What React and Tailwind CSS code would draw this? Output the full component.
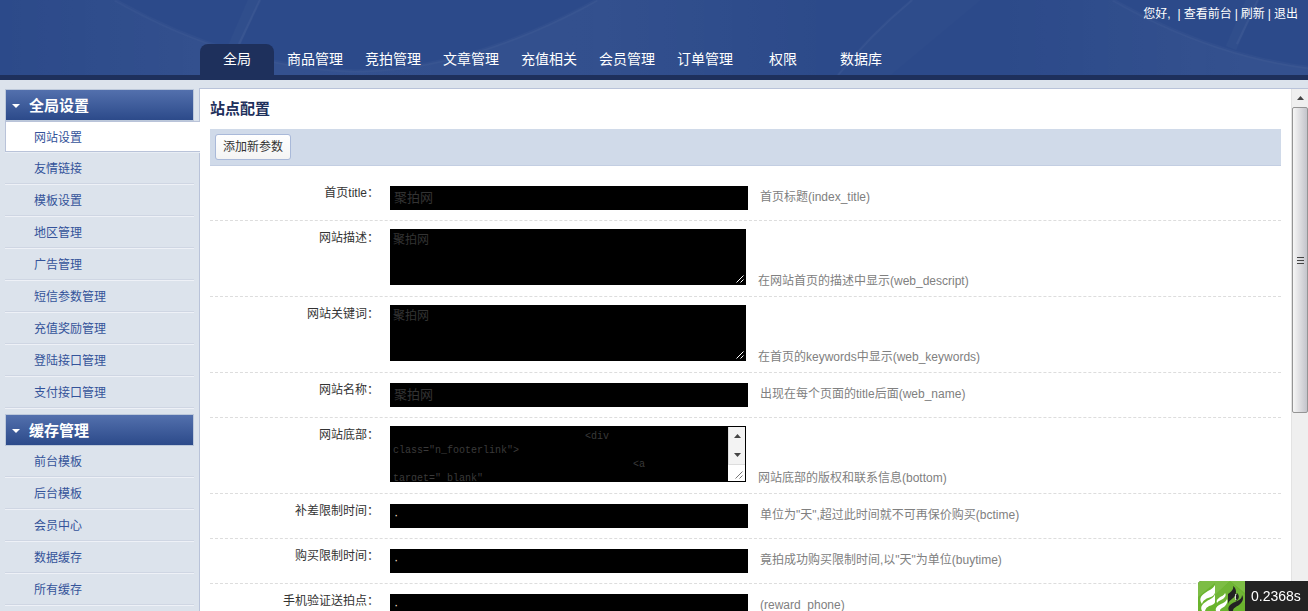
import React, { useState } from 'react';

const NAV_ITEMS = ['全局', '商品管理', '竞拍管理', '文章管理', '充值相关', '会员管理', '订单管理', '权限', '数据库'];

const MENU_GROUPS = [
    {
        title: '全局设置',
        items: ['网站设置', '友情链接', '模板设置', '地区管理', '广告管理', '短信参数管理', '充值奖励管理', '登陆接口管理', '支付接口管理'],
    },
    {
        title: '缓存管理',
        items: ['前台模板', '后台模板', '会员中心', '数据缓存', '所有缓存'],
    },
];

const FOOTER_HTML = ' '.repeat(32) + '<div\nclass="n_footerlink">\n' + ' '.repeat(40) + '<a\ntarget="_blank"';

const FIELDS = [
    { name: 'index_title', label: '首页title', type: 'text', value: '聚拍网', help: '首页标题(index_title)' },
    { name: 'web_descript', label: '网站描述', type: 'area', value: '聚拍网', help: '在网站首页的描述中显示(web_descript)' },
    { name: 'web_keywords', label: '网站关键词', type: 'area', value: '聚拍网', help: '在首页的keywords中显示(web_keywords)' },
    { name: 'web_name', label: '网站名称', type: 'text', value: '聚拍网', help: '出现在每个页面的title后面(web_name)' },
    { name: 'bottom', label: '网站底部', type: 'code', value: FOOTER_HTML, help: '网站底部的版权和联系信息(bottom)' },
    { name: 'bctime', label: '补差限制时间', type: 'number', value: '·', help: '单位为"天",超过此时间就不可再保价购买(bctime)' },
    { name: 'buytime', label: '购买限制时间', type: 'number', value: '·', help: '竟拍成功购买限制时间,以"天"为单位(buytime)' },
    { name: 'reward_phone', label: '手机验证送拍点', type: 'number', value: '·', help: '(reward_phone)' },
];

// Faint arcs and rays behind the header
function HeaderPattern() {
    return (
        <svg className="absolute inset-0 h-full w-full" aria-hidden="true">
            <defs>
                <linearGradient id="glow" gradientUnits="userSpaceOnUse" x1="0" y1="0" x2="830" y2="0">
                    <stop offset="0" stopColor="#fff" stopOpacity="0" />
                    <stop offset="0.3" stopColor="#fff" stopOpacity="0.04" />
                    <stop offset="0.7" stopColor="#fff" stopOpacity="0.035" />
                    <stop offset="1" stopColor="#fff" stopOpacity="0" />
                </linearGradient>
                <pattern id="rays" width="998" height="75" patternUnits="userSpaceOnUse">
                    <path d="M115 0Q235 68 355 71Q470 70 597 0H830V75H0V0Z" fill="url(#glow)" />
                    <path d="M115 0Q235 68 355 71Q470 70 597 0" fill="none" stroke="#fff" strokeOpacity="0.025" strokeWidth="3" />
                    <path d="M260 0L238 50L228 46L248 0Z" fill="#fff" fillOpacity="0.02" />
                    <path d="M260 0L239 44" stroke="#fff" strokeOpacity="0.04" strokeWidth="2" />
                    <path d="M912 0Q870 35 838 75H890L980 0Z" fill="#fff" fillOpacity="0.012" />
                    <path d="M912 0Q870 35 838 75" fill="none" stroke="#fff" strokeOpacity="0.035" strokeWidth="2" />
                </pattern>
            </defs>
            <rect width="100%" height="100%" fill="url(#rays)" />
        </svg>
    );
}

function Header({ active, onSelect }) {
    return (
        <header className="relative flex h-20 shrink-0 flex-col justify-between border-b-5 border-[#1e305c] bg-[#2c4a8a] text-white">
            <HeaderPattern />
            <div className="relative flex justify-end gap-[3px] px-[10px] pt-[6px] text-xs">
                <span className="mr-1">您好,</span>
                <span>|</span>
                <a href="#front">查看前台</a>
                <span>|</span>
                <a href="#refresh">刷新</a>
                <span>|</span>
                <a href="#logout">退出</a>
            </div>
            <nav className="relative ml-[198px] flex text-sm">
                {NAV_ITEMS.map((item) => (
                    <a
                        key={item}
                        href="#nav"
                        onClick={() => onSelect(item)}
                        className={`mx-[2px] flex h-[31px] w-[74px] items-center justify-center rounded-t-lg pb-[2px] ${item === active ? 'bg-[#1e305c]' : ''}`}
                    >
                        {item}
                    </a>
                ))}
            </nav>
        </header>
    );
}

function MenuGroup({ group, active, onSelect }) {
    return (
        <section className="mb-[5px]">
            <h2 className="mr-[5px] flex h-8 items-center gap-[9px] border border-[#bcc8da] bg-linear-to-b from-[#5370ad] to-[#2c4a8a] pt-[2px] pl-[6px] text-[15px] font-bold text-white">
                <svg width="8" height="4" viewBox="0 0 8 4" fill="currentColor" aria-hidden="true">
                    <path d="M0 0H8L4 4Z" />
                </svg>
                {group.title}
            </h2>
            <ul className="text-xs text-[#34539a]">
                {group.items.map((item) => (
                    <li key={item} className={item === active ? 'relative z-10 -mr-px border-b border-[#e8edf4]' : 'mr-[5px] border-b border-[#eef1f7]'}>
                        <a
                            href="#menu"
                            onClick={() => onSelect(item)}
                            className={item === active
                                ? 'flex h-[31px] items-center border-y border-l border-[#b9c3d9] bg-white pt-[2px] pl-7'
                                : 'flex h-[31px] items-center border-b border-[#cfd6e3] pt-[2px] pl-[29px]'}
                        >
                            {item}
                        </a>
                    </li>
                ))}
            </ul>
        </section>
    );
}

function ResizeGrip({ className }) {
    return (
        <svg width="8" height="8" viewBox="0 0 8 8" className={className} stroke="currentColor" aria-hidden="true">
            <path d="M0.5 7.5L7.5 0.5M4.5 7.5L7.5 4.5" />
        </svg>
    );
}

function Arrow({ up }) {
    return (
        <svg width="7" height="4" viewBox="0 0 7 4" fill="#444" aria-hidden="true">
            <path d={up ? 'M0 4H7L3.5 0Z' : 'M0 0H7L3.5 4Z'} />
        </svg>
    );
}

function FieldControl({ field }) {
    const id = `f_${field.name}`;

    if (field.type === 'text' || field.type === 'number') {
        return (
            <input
                id={id}
                name={field.name}
                type="text"
                defaultValue={field.value}
                className={`h-6 w-[358px] bg-black px-1 pb-[3px] text-[13px] outline-none ${field.type === 'text' ? 'text-[#333]' : 'text-[#e8d8c0]'}`}
            />
        );
    }

    if (field.type === 'area') {
        return (
            <div className="relative mb-1">
                <textarea
                    id={id}
                    name={field.name}
                    defaultValue={field.value}
                    className="block h-14 w-[356px] resize-none bg-black px-[3px] py-[3px] text-xs text-[#333] outline-none"
                />
                <ResizeGrip className="absolute right-[2px] bottom-[2px] text-white" />
            </div>
        );
    }

    return (
        <div className="mb-1 flex h-14 w-[356px] border border-black bg-black">
            <textarea
                id={id}
                name={field.name}
                defaultValue={field.value}
                className="block min-w-0 flex-1 resize-none overflow-hidden px-[2px] py-[3px] font-['Liberation_Mono',monospace] text-[10px] leading-[14px] whitespace-pre text-[#3a3a3a] outline-none"
            />
            <div className="flex w-[17px] flex-col bg-white">
                <div className="flex flex-1 flex-col items-center justify-between border-b border-l border-[#ddd] bg-[#f3f3f3] py-[7px]">
                    <Arrow up />
                    <Arrow />
                </div>
                <div className="flex h-4 items-end justify-end p-[2px]">
                    <ResizeGrip className="text-[#777]" />
                </div>
            </div>
        </div>
    );
}

function FieldRow({ field }) {
    const oneLine = field.type === 'text' || field.type === 'number';
    return (
        <div className="flex gap-[11px] border-b border-dashed border-[#ddd]">
            <label htmlFor={`f_${field.name}`} className="w-[169px] shrink-0 pt-[9px] text-right leading-4 text-[#333]">
                {field.label}：
            </label>
            <div className={`flex gap-3 ${oneLine ? 'items-center py-[10px]' : 'items-end pt-2 pb-[7px]'}`}>
                <FieldControl field={field} />
                <span className={`leading-4 text-[#808080] ${oneLine ? 'pb-[2px]' : ''}`}>{field.help}</span>
            </div>
        </div>
    );
}

function ScrollBar() {
    return (
        <div className="flex w-[17px] shrink-0 flex-col border-l border-[#e3e3e3] bg-[#efefef]" aria-hidden="true">
            <div className="flex h-[18px] items-center justify-center">
                <Arrow up />
            </div>
            <div className="flex h-[306px] flex-col items-center justify-center gap-[2px] rounded-[2px] border border-[#949494] bg-linear-to-r from-[#f6f6f6] via-[#dddde0] to-[#c4c4cb]">
                <i className="h-px w-[7px] bg-[#444]" />
                <i className="h-px w-[7px] bg-[#444]" />
                <i className="h-px w-[7px] bg-[#444]" />
            </div>
        </div>
    );
}

function TraceBadge() {
    return (
        <div className="fixed right-0 bottom-0 z-20 flex h-[30px] overflow-hidden rounded-tl-[4px] bg-[#232323] text-sm text-white">
            <svg width="47" height="30" viewBox="0 0 47 30" aria-hidden="true">
                <rect width="47" height="30" fill="#6ab42d" />
                <path d="M0 0H17V2L0 16Z" fill="#7dbd45" />
                <path d="M17 0H47V12L32 0L17 14Z" fill="#7dbd45" />
                <path d="M32 0L47 14V22L17 20V14Z" fill="#70b536" />
                {/* white flame, cut by the second tile */}
                <path d="M17 4C15 8 11 9 7 12C2 15 1 19 4 23C5 19 9 17 13 16C15 15 16 14 17 12Z" fill="#fff" />
                <path d="M17 13C16 17 12 18 9 20C4 23 2 26 4 30H7C8 26 11 25 14 24C16 23 17 22 17 21Z" fill="#fff" />
                <path d="M27 12C26 15 23 15 21 17C19 18 18 20 19 22C21 19 24 19 26 17C28 15 28 13 27 12Z" fill="#fff" />
                <path d="M29 18C28 21 25 22 23 23C19 25 17 27 18 30H22C22 27 25 27 27 25C29 23 30 20 29 18Z" fill="#fff" />
                <path d="M35 5C36 8 34 10 30 13V23C31 19 35 18 37 15C39 11 38 7 35 5Z" fill="#232323" />
                <path d="M44 14C44 18 41 19 37 21C32 23 29 26 31 30H35C35 27 38 26 41 24C45 21 46 17 44 14Z" fill="#232323" />
                <path d="M39 12C42 15 41 18 38 20C37 17 37 14 39 12Z" fill="#232323" />
                <path d="M38 13C37 15 37 17 38 19" fill="none" stroke="#fff" />
            </svg>
            <span className="w-[63px] px-[6px] leading-[30px]">0.2368s</span>
        </div>
    );
}

export default function App() {
    const [nav, setNav] = useState('全局');
    const [menu, setMenu] = useState('网站设置');

    return (
        <div className="flex h-screen flex-col overflow-hidden bg-[#dce3ec] font-['Liberation_Sans','Noto_Sans_CJK_SC',sans-serif] text-xs">
            <Header active={nav} onSelect={setNav} />
            <div className="flex min-h-0 flex-1 pt-2">
                <aside className="w-[199px] shrink-0 pt-px pl-[5px]">
                    {MENU_GROUPS.map((group) => (
                        <MenuGroup key={group.title} group={group} active={menu} onSelect={setMenu} />
                    ))}
                </aside>
                <main className="flex min-w-0 flex-1 border-t border-l border-[#b9c3d9] bg-white">
                    <form className="min-w-0 flex-1 overflow-hidden px-[10px]" onSubmit={(e) => e.preventDefault()}>
                        <h1 className="flex h-10 items-center text-[15px] font-bold text-[#1e305c]">站点配置</h1>
                        <div className="mb-[10px] border-b border-[#c3cee2] bg-[#d0dae9] px-[5px] py-[5px]">
                            <button
                                type="button"
                                className="block h-[26px] rounded-[3px] border border-[#a9b9d9] bg-linear-to-b from-white to-[#f4f4f4] px-[7px] text-[#333]"
                            >
                                添加新参数
                            </button>
                        </div>
                        {FIELDS.map((field) => (
                            <FieldRow key={field.name} field={field} />
                        ))}
                    </form>
                    <ScrollBar />
                </main>
            </div>
            <TraceBadge />
        </div>
    );
}
